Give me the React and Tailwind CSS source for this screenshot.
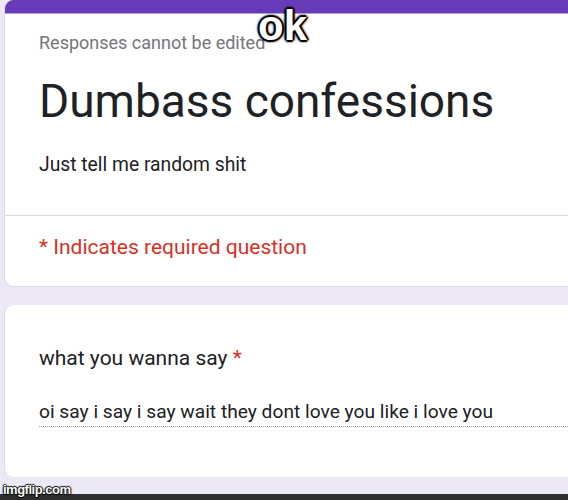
export default function App() {
  return (
    <div className="relative w-[568px] h-[500px] overflow-hidden bg-[#ece8f6] font-['Roboto',_'Liberation_Sans',_sans-serif]">
      <div className="flex flex-col pl-[4px]">
        {/* header card */}
        <div className="w-[600px] bg-white rounded-l-[9px] border-l border-b border-[#dcdae3] overflow-hidden">
          <div className="h-[14px] bg-[#673ab7] border-b border-[#b39ddb]" />
          <div className="pl-[34px] pt-[20px] pr-6">
            <div className="text-[18px] leading-none text-[#75757a]">Responses cannot be edited</div>
            <div className="mt-[26px] text-[46px] leading-none text-[#202124]">Dumbass confessions</div>
            <div className="mt-[31px] text-[19.3px] leading-none text-[#202124]">Just tell me random shit</div>
          </div>
          <div className="mt-[41px] border-t border-[#dadce0]" />
          <div className="pl-[34px] pt-[21px] pb-[28px] text-[21px] leading-none text-[#d93025]">* Indicates required question</div>
        </div>

        {/* question card */}
        <div className="mt-[18px] w-[600px] bg-white rounded-l-[9px] border-l border-[#dcdae3] pl-[34px] pt-[43px] pb-[50px]">
          <div className="text-[21px] leading-none text-[#202124]">
            what you wanna say <span className="text-[#d93025]">*</span>
          </div>
          <div className="mt-[33px] pb-[4px] border-b border-dotted border-[#9e9e9e] text-[19.2px] leading-none text-[#202124]">
            oi say i say i say wait they dont love you like i love you
          </div>
        </div>
      </div>

      {/* bottom dark strip */}
      <div className="absolute left-0 right-0 bottom-0 h-[6px] bg-[#2e2e2e]" />

      {/* meme caption */}
      <div className="absolute left-[258px] top-[5px] text-[42px] leading-none font-bold text-white font-['Liberation_Sans',_Arial,_sans-serif] [text-shadow:2px_0_1px_#000,-2px_0_1px_#000,0_2px_1px_#000,0_-2px_1px_#000,1px_1px_2px_#000,-1px_-1px_2px_#000,1px_-1px_2px_#000,-1px_1px_2px_#000,0_0_4px_#000]">
        ok
      </div>

      {/* watermark */}
      <div className="absolute left-[3px] bottom-[4px] text-[13px] leading-none font-bold text-white font-['Liberation_Sans',_Arial,_sans-serif] tracking-[-0.5px] [text-shadow:1px_0_1px_#000,-1px_0_1px_#000,0_1px_1px_#000,0_-1px_1px_#000]">
        imgflip.com
      </div>
    </div>
  );
}
